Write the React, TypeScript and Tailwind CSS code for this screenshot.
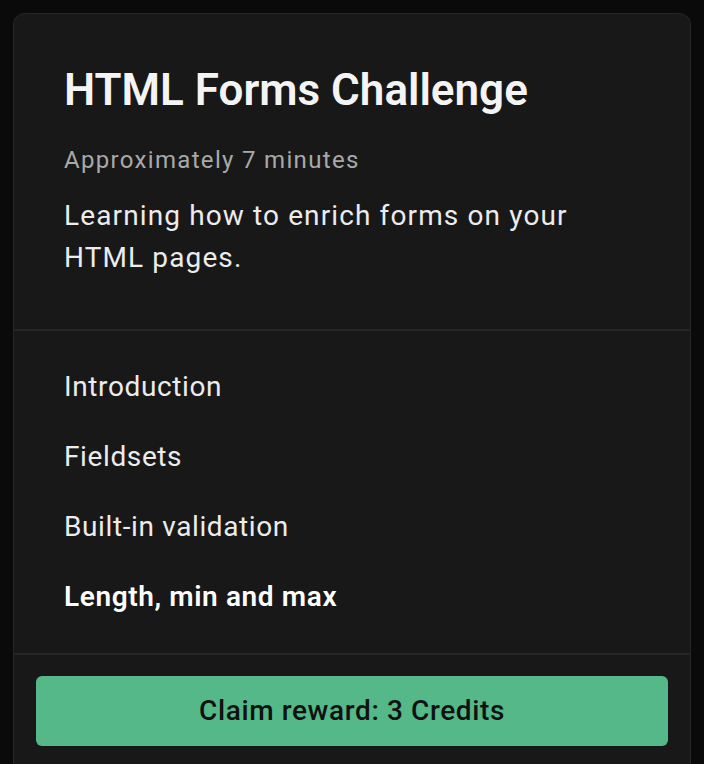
const lessons = [
  { title: 'Introduction', active: false },
  { title: 'Fieldsets', active: false },
  { title: 'Built-in validation', active: false },
  { title: 'Length, min and max', active: true },
];

const App = () => {
  return (
    <div className="min-h-screen bg-[#0a0a0a] pt-[13px] px-[13px] font-['Roboto',sans-serif]">
      <div className="rounded-t-[12px] border border-b-0 border-[#262626] bg-[#181818] h-[751px] flex flex-col">
        <div className="px-[50px] pt-[50px] pb-[50px]">
          <h1 className="text-[44px] leading-[52px] font-semibold text-[#f4f4f4]">HTML Forms Challenge</h1>
          <p className="mt-[28px] text-[24px] leading-[32px] tracking-[0.055em] text-[#a9a9a9]">
            Approximately 7 minutes
          </p>
          <p className="mt-[19px] text-[28px] leading-[42px] tracking-[0.04em] text-[#ececec]">
            Learning how to enrich forms on your
            <br />
            HTML pages.
          </p>
        </div>
        <ul className="border-t-2 border-[#262626] px-[50px] py-[35px] flex flex-col gap-[28px]">
          {lessons.map((lesson) => (
            <li
              key={lesson.title}
              className={`text-[28px] leading-[42px] tracking-[0.022em] ${lesson.active ? 'font-semibold text-white' : 'text-[#ececec]'}`}
            >
              {lesson.title}
            </li>
          ))}
        </ul>
        <div className="border-t-2 border-[#262626] px-[22px] pt-[21px]">
          <button className="w-full h-[70px] rounded-[6px] bg-[#55b888] text-[28px] tracking-[0.022em] font-medium text-[#111111]">
            Claim reward: 3 Credits
          </button>
        </div>
      </div>
    </div>
  );
};

export default App;
